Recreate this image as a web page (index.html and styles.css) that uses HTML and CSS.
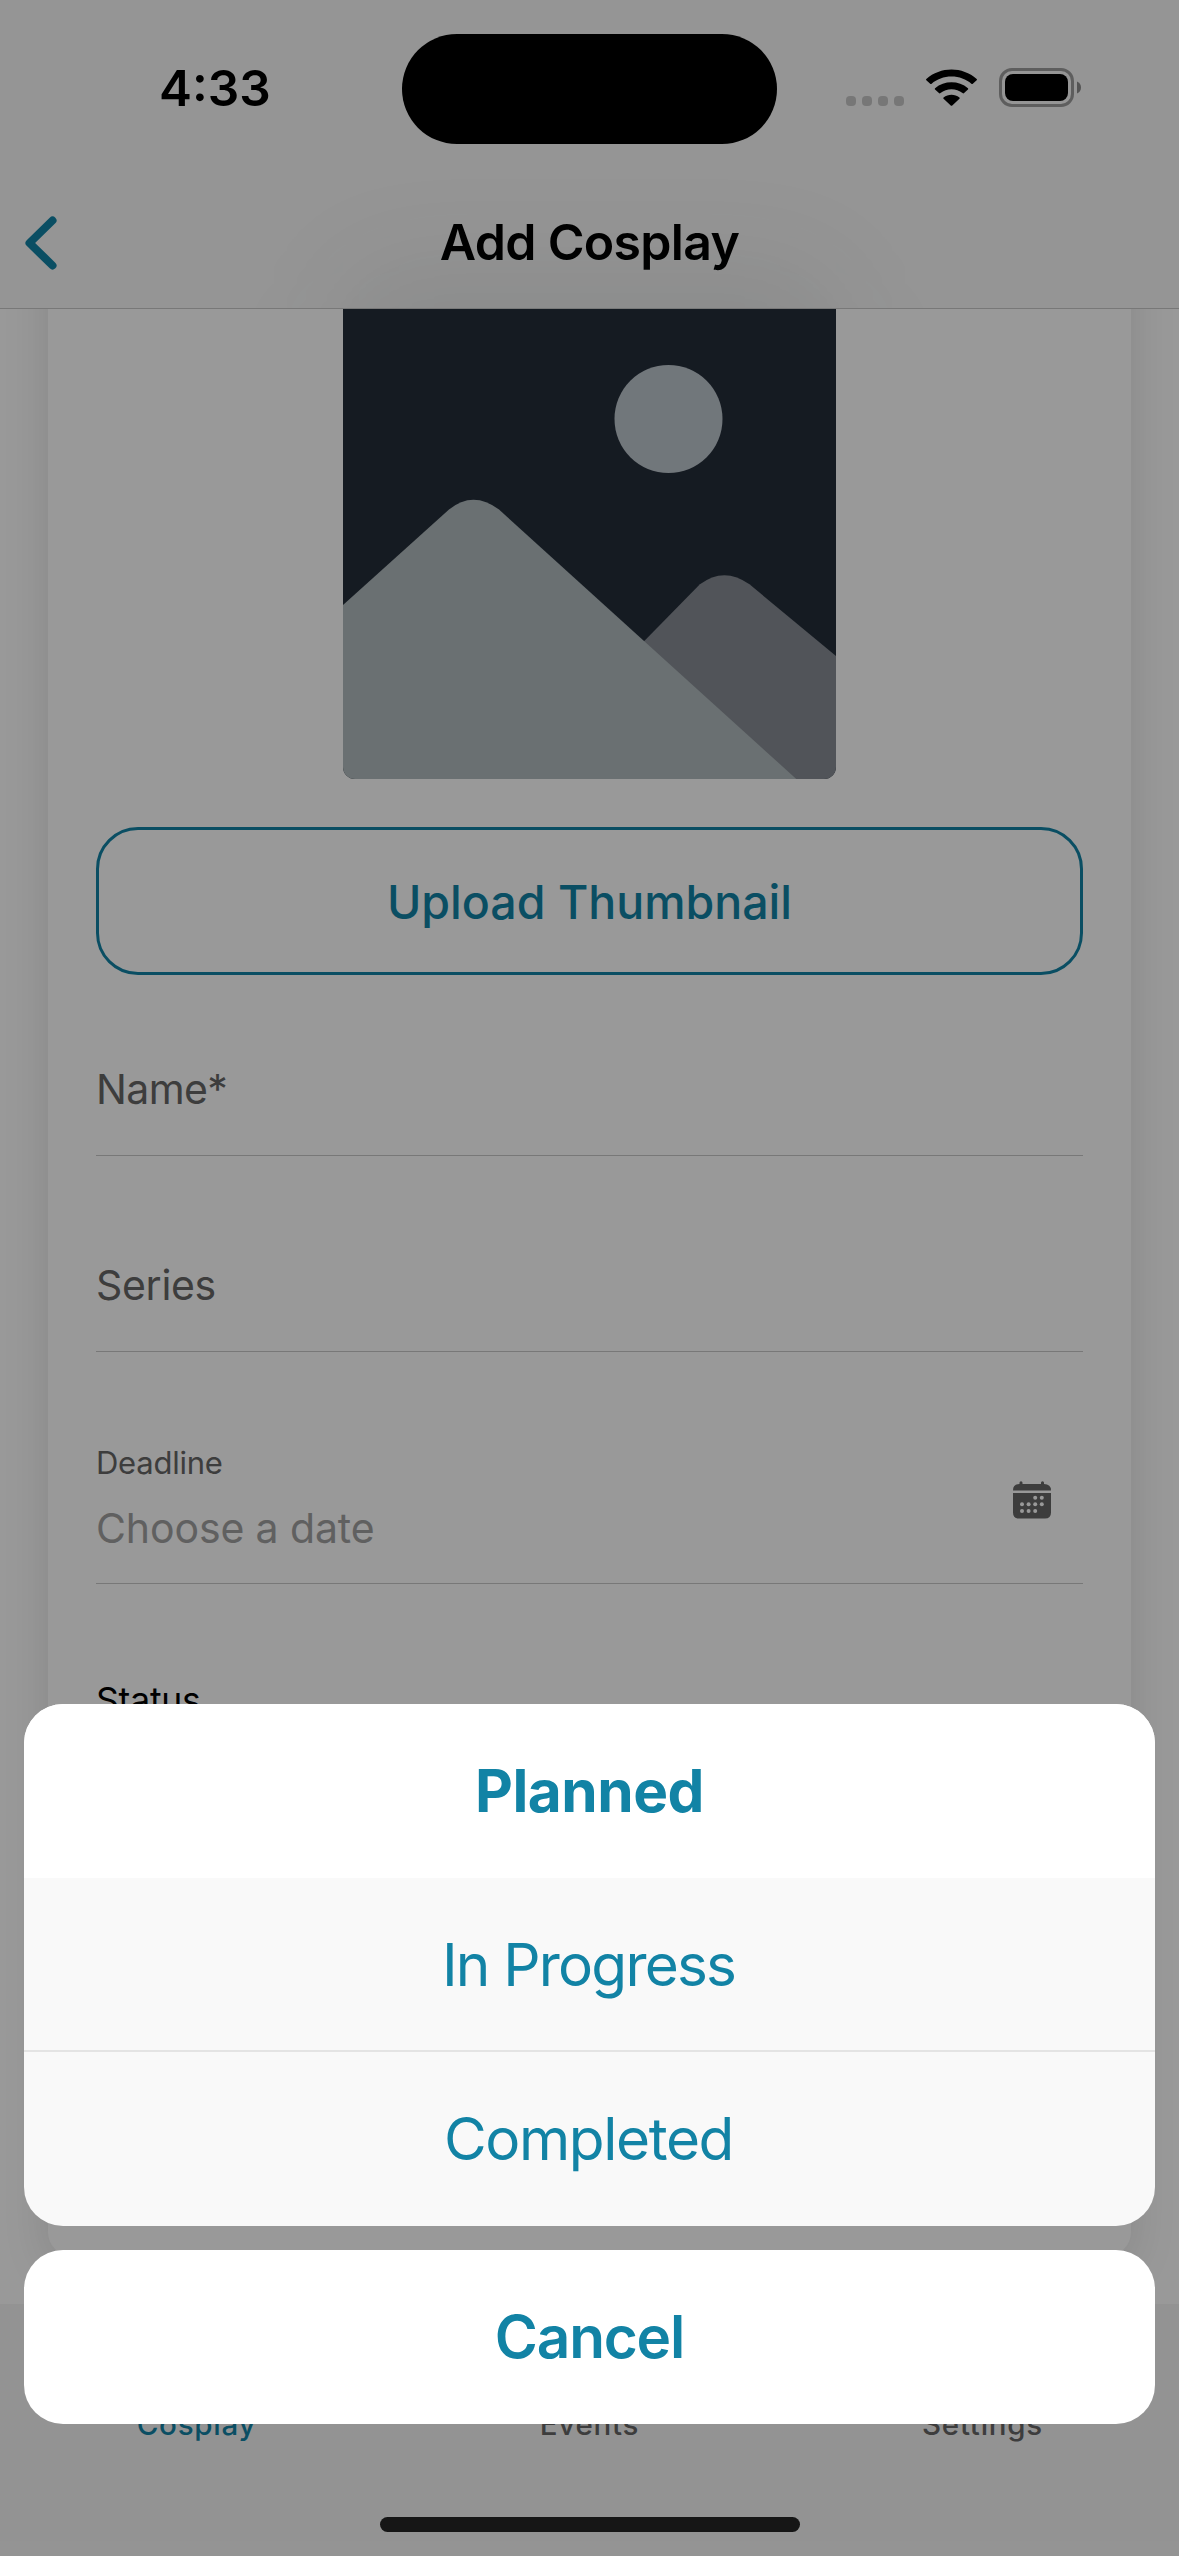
FILE: index.html
```html
<!DOCTYPE html>
<html lang="en">
<head>
<meta charset="utf-8">
<title>Add Cosplay</title>
<link rel="stylesheet" href="styles.css">
</head>
<body>
<div class="app">
  <header class="header">
    <div class="status-bar">
      <div class="time">4:33</div>
      <div class="island"></div>
      <div class="indicators">
        <svg class="signal" viewBox="0 0 58 10"><rect width="10" height="10" rx="4"/><rect x="16" width="10" height="10" rx="4"/><rect x="32" width="10" height="10" rx="4"/><rect x="48" width="10" height="10" rx="4"/></svg>
        <svg class="wifi" viewBox="2.400 0 46.200 37" preserveAspectRatio="none"><path d="M25.5 7.6c6.9 0 13.300 2.700 18 7.200.4.400 1 .4 1.300 0l3.500-3.500c.4-.4.400-1 0-1.400C35.500-2.800 15.500-2.800 2.700 9.900c-.4.400-.4 1 0 1.400l3.500 3.500c.3.400.900.400 1.300 0 4.700-4.500 11.100-7.200 18-7.200z"/><path d="M25.500 20.200c3.700 0 7.200 1.400 10 3.900.4.400 1 .4 1.400 0l3.500-3.500c.4-.4.400-1 0-1.400-8.400-7.900-21.400-7.900-29.800 0-.4.400-.4 1 0 1.400l3.500 3.500c.4.400 1 .4 1.400 0 2.800-2.500 6.300-3.900 10-3.900z"/><path d="M32.700 28.400c.4.400.4 1 0 1.400l-6.500 6.700c-.4.400-1 .4-1.400 0l-6.500-6.700c-.4-.4-.4-1 0-1.400 4.200-3.500 10.200-3.500 14.400 0z"/></svg>
        <svg class="battery" viewBox="0 0 82 39"><rect class="battery-case" x="1.500" y="1.500" width="72" height="36" rx="11.500"/><rect x="6" y="6" width="63" height="27" rx="8"/><path class="battery-tip" d="M78 13.500c2.500 1 4 3.300 4 6s-1.500 5-4 6z"/></svg>
      </div>
    </div>
    <div class="toolbar">
      <svg class="back" viewBox="0 0 32 54"><path d="M27.500 4.500L4.500 27l23 22.500"/></svg>
      <h1 class="title">Add Cosplay</h1>
    </div>
  </header>

  <main class="content">
    <section class="card">
      <svg class="thumbnail" viewBox="0 0 493 470">
        <rect class="sky" width="493" height="470"/>
        <circle class="moon" cx="325.500" cy="110" r="54"/>
        <path class="far-hill" d="M290 343.500L356.900 275.300Q381 257 406.500 275.300L493 347V470H290z"/>
        <path class="near-hill" d="M0 296L106 200.500Q130 181 156 200.500L453.300 470H0z"/>
      </svg>
      <button class="upload">Upload Thumbnail</button>
      <div class="field first"><span class="name-label">Name*</span></div>
      <div class="field"><span class="series-label">Series</span></div>
      <div class="field date-field">
        <div class="date-text">
          <span class="deadline-label">Deadline</span>
          <span class="placeholder">Choose a date</span>
        </div>
        <svg class="calendar" viewBox="0 0 38 38"><path d="M0 9.500Q0 3 6.500 3V1.700a1.500 1.500 0 0 1 3 0V3h18.500V1.700a1.500 1.500 0 0 1 3 0V3Q38 3 38 9.500zM0 12h38v19.500q0 6-6 6H6q-6 0-6-6z"/><g class="calendar-days"><circle cx="22.200" cy="16.700" r="2"/><circle cx="28.800" cy="16.700" r="2"/><circle cx="9" cy="23.300" r="2"/><circle cx="15.600" cy="23.300" r="2"/><circle cx="22.200" cy="23.300" r="2"/><circle cx="28.800" cy="23.300" r="2"/><circle cx="9" cy="29.900" r="2"/><circle cx="15.600" cy="29.900" r="2"/><circle cx="22.200" cy="29.900" r="2"/></g></svg>
      </div>
      <div class="status-field">Status</div>
    </section>
  </main>

  <nav class="tabs">
    <span class="tab active">Cosplay</span>
    <span class="tab">Events</span>
    <span class="tab">Settings</span>
  </nav>
  <div class="home-indicator"></div>

  <div class="overlay">
    <div class="sheet">
      <button class="option selected">Planned</button>
      <button class="option divided"><span class="progress-text">In Progress</span></button>
      <button class="option"><span class="completed-text">Completed</span></button>
    </div>
    <div class="sheet">
      <button class="option cancel">Cancel</button>
    </div>
  </div>
</div>
</body>
</html>
```
FILE: styles.css
```css
* { box-sizing: border-box; }
body { margin: 0; font-family: Inter, "Liberation Sans", sans-serif; background: #fff; color: #000; }
button { font: inherit; border: 0; background: none; padding: 0; display: block; width: 100%; }
svg { display: block; flex: none; }

.app { position: relative; width: 1179px; height: 2556px; overflow: hidden; display: flex; flex-direction: column; }

.header { position: relative; z-index: 1; height: 309px; flex: none; background: #f8f8f8; border-bottom: 1px solid #c8c8c8; overflow: hidden; }
/* soft tint of the thumbnail behind the translucent bar */
.header::after { content: ""; position: absolute; left: 343px; top: 270px; width: 493px; height: 300px; border-radius: 60px; background: rgba(35, 45, 57, .08); filter: blur(50px); }
.status-bar { display: grid; grid-template-columns: 402px 375px 1fr; padding-top: 34px; height: 180px; align-items: start; }
.time { padding: 27px 0 0 159px; font-size: 49.500px; line-height: 54px; font-weight: 600; white-space: nowrap; }
.island { height: 110px; border-radius: 55px; background: #000; }
.indicators { display: flex; align-items: flex-start; padding: 34px 0 0 69px; }
.signal { width: 58px; height: 10px; margin-top: 28px; fill: #c7c7c7; }
.wifi { width: 51px; height: 37px; margin: 1px 0 0 22px; }
.battery { width: 82px; height: 39px; margin-left: 22px; }
.battery-case { fill: none; stroke: #9d9d9d; stroke-width: 3; }
.battery-tip { fill: #8d8d8d; }
.toolbar { display: flex; align-items: center; height: 126px; padding: 0 25px; }
.back { width: 32px; height: 54px; fill: none; stroke: #1283a5; stroke-width: 8; stroke-linecap: round; stroke-linejoin: round; }
.title { flex: 1; margin: -2px 32px 0 0; text-align: center; font-size: 50px; line-height: 60px; font-weight: 600; letter-spacing: -.7px; }

.content { height: 1995px; flex: none; padding: 0 48px; }
/* the card is scrolled, its top lies under the header */
.card { height: 2067px; margin-top: -120px; padding: 120px 48px 0; border-radius: 24px; background: #fff; box-shadow: 0 12px 48px rgba(0, 0, 0, .12); }
.thumbnail { width: 493px; height: 470px; margin: 0 auto 48px; border-radius: 0 0 12px 12px; }
.sky { fill: #232d39; }
.moon { fill: #bdc6cd; }
.far-hill { fill: #878c94; }
.near-hill { fill: #b1bbbe; }
.upload { height: 148px; padding-top: 1px; border: 3px solid #1283a5; border-radius: 42px; color: #1283a5; font-size: 46.500px; font-weight: 500; line-height: 56px; }
.field { display: flex; align-items: flex-end; height: 196px; padding-bottom: 42px; border-bottom: 1px solid #c8c8c8; color: #666; font-size: 41px; line-height: 48px; }
.field.first { height: 181px; }
.name-label { letter-spacing: -.6px; }
.series-label { letter-spacing: -.3px; }
.date-field { height: 232px; padding: 0 32px 31px 0; justify-content: space-between; }
.date-text { display: flex; flex-direction: column; align-items: flex-start; gap: 23px; }
.deadline-label { font-size: 31px; line-height: 36px; letter-spacing: -.25px; }
.placeholder { color: #a1a1a1; letter-spacing: -.12px; }
.calendar { width: 38px; height: 38px; margin-bottom: 33px; fill: #666; }
.calendar-days { fill: #fff; }
.status-field { padding-top: 93px; font-size: 35.500px; line-height: 48px; letter-spacing: -.2px; }

.tabs { position: relative; display: grid; grid-template-columns: repeat(3, 1fr); flex: none; height: 213px; padding-top: 102px; background: #f6f6f6; color: #666; font-size: 29.500px; line-height: 36px; font-weight: 500; letter-spacing: .75px; text-align: center; }
.tab.active { color: #1283a5; }
.home-indicator { flex: none; height: 39px; background: #f6f6f6; }
.home-indicator::before { content: ""; display: block; width: 420px; height: 15px; margin: 0 auto; border-radius: 8px; background: #262626; }

.overlay { position: absolute; inset: 0; z-index: 2; display: flex; flex-direction: column; justify-content: flex-end; gap: 24px; padding: 0 24px 132px; background: rgba(0, 0, 0, .4); }
.sheet { border-radius: 39px; overflow: hidden; background: #f9f9f9; }
.option { height: 174px; color: #1283a5; font-size: 58.500px; line-height: 72px; }
.option.divided { padding-top: 2px; border-bottom: 2px solid #e4e4e4; }
.option.selected { background: #fff; font-weight: 700; letter-spacing: -.5px; }
.option.cancel { background: #fff; font-weight: 600; letter-spacing: -1.2px; }
.progress-text { margin-left: -2px; letter-spacing: -1.8px; }
.completed-text { margin-left: -2px; letter-spacing: -1.4px; }
```
